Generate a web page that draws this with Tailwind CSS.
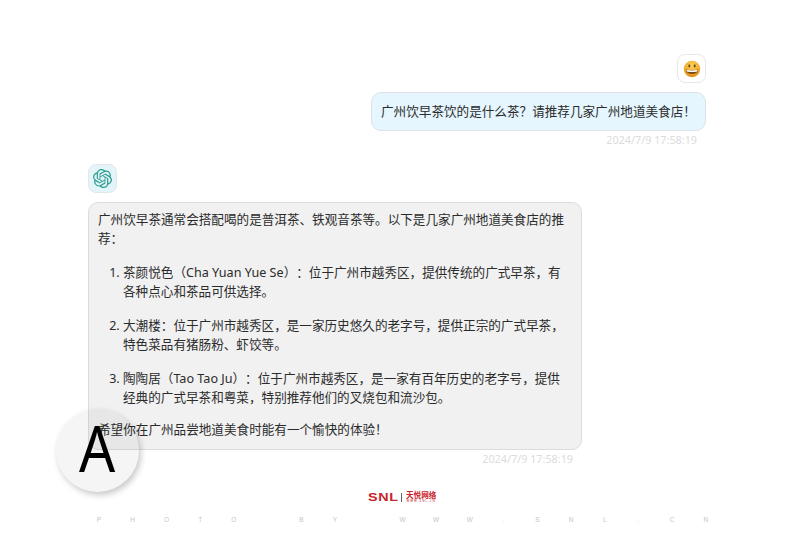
<!DOCTYPE html>
<html lang="en">

<head>
    <meta charset="UTF-8">
    <title>Chat</title>
    <script src="https://cdn.jsdelivr.net/npm/@tailwindcss/browser@4"></script>
</head>

<body class="bg-white">
    <div class="relative w-[800px] h-[533px] overflow-hidden pt-[54px] pl-[88px] pr-[94px] font-['Noto_Sans','Noto_Sans_CJK_SC',sans-serif] text-[12.6px] leading-[19px] text-[#2b2b2b] [text-spacing-trim:space-all]">

        <!-- user message -->
        <div class="flex flex-col items-end">
            <div class="w-[29px] h-[29px] rounded-lg border border-[#e8e8e8] bg-white flex items-center justify-center">
                <svg class="w-[18px] h-[18px]" viewBox="0 0 18 18">
                    <defs>
                        <radialGradient id="face" cx="50%" cy="30%" r="70%">
                            <stop offset="0%" stop-color="#fad35c" />
                            <stop offset="65%" stop-color="#f0ab2c" />
                            <stop offset="100%" stop-color="#d9860f" />
                        </radialGradient>
                    </defs>
                    <circle cx="9" cy="9" r="8.2" fill="url(#face)" />
                    <ellipse cx="6.3" cy="6" rx="1" ry="1.4" fill="#6b4210" />
                    <ellipse cx="11.7" cy="6" rx="1" ry="1.4" fill="#6b4210" />
                    <path d="M3 9.4Q9 11 15 9.4Q14.4 14 9 14Q3.6 14 3 9.4Z" fill="#7a4a12" />
                    <path d="M3.6 9.8Q9 11.2 14.4 9.8L14 11.4Q9 12.6 4 11.4Z" fill="#fff" />
                </svg>
            </div>
            <div class="mt-[9px] h-[39px] w-[335px] rounded-[10px] border border-[#dbe3e8] bg-[#e5f6fe] px-[9px] flex items-center whitespace-nowrap">广州饮早茶饮的是什么茶？请推荐几家广州地道美食店！</div>
            <div class="mt-[1px] pr-[9px] text-[10.8px] leading-[15px] text-[#dcdcdc]">2024/7/9 17:58:19</div>
        </div>

        <!-- assistant message -->
        <div class="mt-[17px] flex flex-col items-start">
            <div class="w-[29px] h-[29px] rounded-lg border border-[#e0e8ec] bg-[#e4f5fa] flex items-center justify-center">
                <svg class="w-[19px] h-[19px]" viewBox="0 0 24 24" fill="#2f9e90">
                    <path d="M22.2819 9.8211a5.9847 5.9847 0 0 0-.5157-4.9108 6.0462 6.0462 0 0 0-6.5098-2.9A6.0651 6.0651 0 0 0 4.9807 4.1818a5.9847 5.9847 0 0 0-3.9977 2.9 6.0462 6.0462 0 0 0 .7427 7.0966 5.98 5.98 0 0 0 .511 4.9107 6.051 6.051 0 0 0 6.5146 2.9001A5.9847 5.9847 0 0 0 13.2599 24a6.0557 6.0557 0 0 0 5.7718-4.2058 5.9894 5.9894 0 0 0 3.9977-2.9001 6.0557 6.0557 0 0 0-.7475-7.0729zm-9.022 12.6081a4.4755 4.4755 0 0 1-2.8764-1.0408l.1419-.0804 4.7783-2.7582a.7948.7948 0 0 0 .3927-.6813v-6.7369l2.02 1.1686a.071.071 0 0 1 .038.052v5.5826a4.504 4.504 0 0 1-4.4945 4.4944zm-9.6607-4.1254a4.4708 4.4708 0 0 1-.5346-3.0137l.142.0852 4.783 2.7582a.7712.7712 0 0 0 .7806 0l5.8428-3.3685v2.3324a.0804.0804 0 0 1-.0332.0615L9.74 19.9502a4.4992 4.4992 0 0 1-6.1408-1.6464zM2.3408 7.8956a4.485 4.485 0 0 1 2.3655-1.9728V11.6a.7664.7664 0 0 0 .3879.6765l5.8144 3.3543-2.0201 1.1685a.0757.0757 0 0 1-.071 0l-4.8303-2.7865A4.504 4.504 0 0 1 2.3408 7.872zm16.5963 3.8558L13.1038 8.364 15.1192 7.2a.0757.0757 0 0 1 .071 0l4.8303 2.7913a4.4944 4.4944 0 0 1-.6765 8.1042v-5.6772a.79.79 0 0 0-.407-.667zm2.0107-3.0231l-.142-.0852-4.7735-2.7818a.7759.7759 0 0 0-.7854 0L9.409 9.2297V6.8974a.0662.0662 0 0 1 .0284-.0615l4.8303-2.7866a4.4992 4.4992 0 0 1 6.6802 4.66zM8.3065 12.863l-2.02-1.1638a.0804.0804 0 0 1-.038-.0567V6.0742a4.4992 4.4992 0 0 1 7.3757-3.4537l-.142.0805L8.704 5.459a.7948.7948 0 0 0-.3927.6813zm1.0976-2.3654l2.602-1.4998 2.6069 1.4998v2.9994l-2.5974 1.4997-2.6067-1.4997Z" />
                </svg>
            </div>
            <div class="mt-[9px] w-[494px] h-[248px] rounded-[10px] border border-[#dcdcdc] bg-[#f1f1f1] pl-[9px] pr-[14px] pt-[7px]">
                <p>广州饮早茶通常会搭配喝的是普洱茶、铁观音茶等。以下是几家广州地道美食店的推荐：</p>
                <ol class="mt-[15px] pl-[25px] list-decimal space-y-[15px]">
                    <li>茶颜悦色（Cha Yuan Yue Se）：位于广州市越秀区，提供传统的广式早茶，有各种点心和茶品可供选择。</li>
                    <li>大潮楼：位于广州市越秀区，是一家历史悠久的老字号，提供正宗的广式早茶，特色菜品有猪肠粉、虾饺等。</li>
                    <li>陶陶居（Tao Tao Ju）：位于广州市越秀区，是一家有百年历史的老字号，提供经典的广式早茶和粤菜，特别推荐他们的叉烧包和流沙包。</li>
                </ol>
                <p class="mt-[13px]">希望你在广州品尝地道美食时能有一个愉快的体验！</p>
            </div>
            <div class="w-[494px] pr-[9px] mt-[1px] text-right text-[10.8px] leading-[15px] text-[#dcdcdc]">2024/7/9 17:58:19</div>
        </div>

        <!-- floating font button -->
        <div class="absolute left-[56px] top-[409px] w-[83px] h-[83px] rounded-full bg-black/[0.04] shadow-[2px_3px_6px_rgba(0,0,0,0.22)] flex items-center justify-center pb-[6px] text-[63px] leading-none text-black font-['Noto_Sans',sans-serif] font-normal">
            <span class="inline-block scale-x-90">A</span>
        </div>

        <!-- watermark -->
        <div class="absolute left-[368px] top-[491px] flex items-center text-[#c8242c] leading-none">
            <span class="w-[30px] font-['Liberation_Sans',sans-serif] font-bold text-[11px] tracking-[0.5px] scale-x-[1.3] origin-left">SNL</span>
            <span class="ml-[3px] mr-[4px] w-px h-[9px] bg-[#666]"></span>
            <div class="flex flex-col items-center">
                <span class="text-[7.6px] leading-[8px] font-bold">天悦网络</span>
                <span class="mt-[1px] text-[3px] leading-[3px] tracking-[1px]">WWW.SNL.CN</span>
            </div>
        </div>
        <div class="absolute left-[95px] top-[516px] w-[615px] flex justify-between text-[6.5px] leading-[8px] text-[#c4c4c4] font-['Liberation_Sans',sans-serif]">
            <span class="w-[8px] text-center">P</span><span class="w-[8px] text-center">H</span><span class="w-[8px] text-center">O</span><span class="w-[8px] text-center">T</span><span class="w-[8px] text-center">O</span><span class="w-[8px] text-center"> </span><span class="w-[8px] text-center">B</span><span class="w-[8px] text-center">Y</span><span class="w-[8px] text-center"> </span><span class="w-[8px] text-center">W</span><span class="w-[8px] text-center">W</span><span class="w-[8px] text-center">W</span><span class="w-[8px] text-center">.</span><span class="w-[8px] text-center">S</span><span class="w-[8px] text-center">N</span><span class="w-[8px] text-center">L</span><span class="w-[8px] text-center">.</span><span class="w-[8px] text-center">C</span><span class="w-[8px] text-center">N</span>
        </div>
    </div>
</body>

</html>
